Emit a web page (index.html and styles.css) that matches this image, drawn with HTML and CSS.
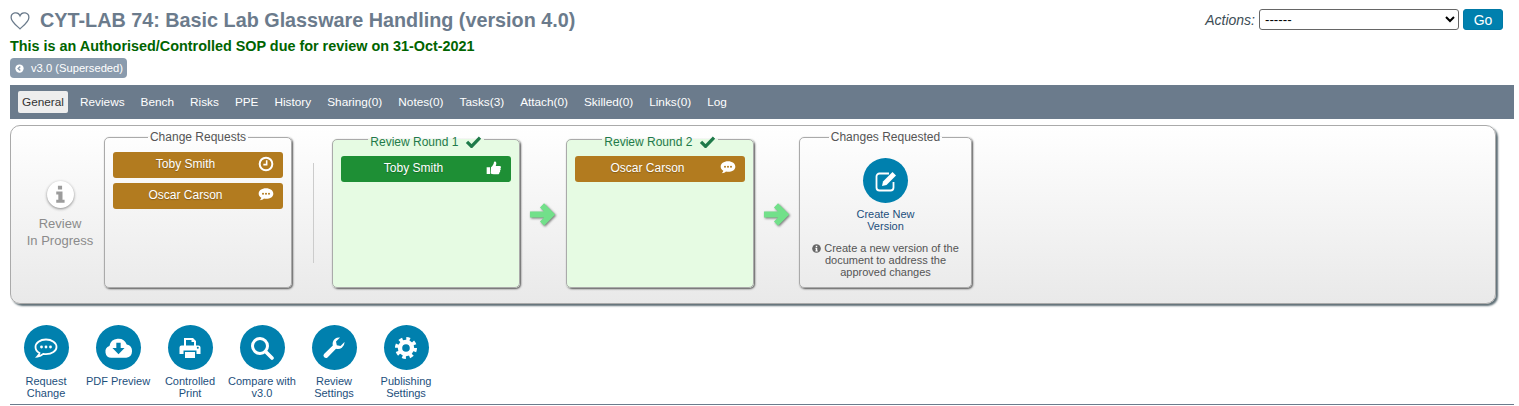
FILE: index.html
```html
<!DOCTYPE html>
<html lang="en">
<head>
	<meta charset="UTF-8">
	<title>CYT-LAB 74</title>
	<link rel="stylesheet" href="styles.css">
</head>
<body>
	<section class="page">
		<header class="head">
			<div class="head_left">
				<h1 class="title">
					<svg class="heart" viewBox="0 0 24 22"><path d="M12 20.5C7 16 1.2 11.8 1.2 7A5.6 5.6 0 0 1 12 4.6 5.6 5.6 0 0 1 22.8 7C22.8 11.8 17 16 12 20.5Z"/></svg>
					CYT-LAB 74: Basic Lab Glassware Handling (version 4.0)
				</h1>
				<p class="status">This is an Authorised/Controlled SOP due for review on 31-Oct-2021</p>
				<a class="badge">
					<svg viewBox="0 0 24 24"><circle cx="12" cy="12" r="11" fill="#fff"/><path d="M14 6.5 8.5 12l5.5 5.5" fill="none" stroke="#8a9bad" stroke-width="4"/></svg>
					v3.0 (Superseded)
				</a>
			</div>
			<form class="actions">
				<label>Actions:</label>
				<select><option>------</option></select>
				<button type="button">Go</button>
			</form>
		</header>

		<nav class="tabs">
			<a class="active">General</a>
			<a>Reviews</a>
			<a>Bench</a>
			<a>Risks</a>
			<a>PPE</a>
			<a>History</a>
			<a>Sharing(0)</a>
			<a>Notes(0)</a>
			<a>Tasks(3)</a>
			<a>Attach(0)</a>
			<a>Skilled(0)</a>
			<a>Links(0)</a>
			<a>Log</a>
		</nav>

		<section class="flow">
			<div class="state">
				<span class="state_icon">
					<svg viewBox="0 0 24 24"><path d="M9.5 2h5v4.500h-5zM7.500 9h7.500v10h2.500v3.500h-10V19H10v-6.500H7.500z" fill="#9c9c9c"/></svg>
				</span>
				<p>Review<br>In Progress</p>
			</div>

			<fieldset class="box">
				<legend>Change Requests</legend>
				<div class="chip amber">Toby Smith
					<svg viewBox="0 0 24 24"><circle cx="12" cy="12" r="9.5" fill="none" stroke="#fff" stroke-width="3"/><path d="M13 6.500V13H8" fill="none" stroke="#fff" stroke-width="2.400"/></svg>
				</div>
				<div class="chip amber">Oscar Carson
					<svg viewBox="0 0 24 22"><path d="M12 1C5.600 1 1 4.600 1 9c0 2.600 1.600 4.800 4 6.200-.3 1.300-1.100 2.600-2.300 3.800 2.500-.3 4.700-1.300 6.300-2.700 1 .2 2 .3 3 .3 6.400 0 11-3.200 11-7.600S18.400 1 12 1Z" fill="#fff"/><circle cx="7.500" cy="9" r="1.500" fill="#b27b1f"/><circle cx="12" cy="9" r="1.500" fill="#b27b1f"/><circle cx="16.500" cy="9" r="1.500" fill="#b27b1f"/></svg>
				</div>
			</fieldset>

			<div class="divider"></div>

			<fieldset class="box round">
				<legend>Review Round 1
					<svg class="tick" viewBox="0 0 24 20"><path d="M2 10.500 9 17.500 22 4" fill="none" stroke="#1f7a4a" stroke-width="5"/></svg>
				</legend>
				<div class="chip green">Toby Smith
					<svg viewBox="0 0 24 24"><path d="M1 11h5v10H1zM7.500 11c2.500-2 4-4.500 4.500-8 0-1 3.500-1.500 3.500 2 0 1.500-.5 3-1 4h6c2.500 0 2.500 3 1 3.500 1 1 .8 2.800-.5 3.300.6 1.200.2 2.600-1 3 .3 1.500-.5 2.700-2.500 2.700h-6c-2 0-3.500-.5-4.500-1.200z" fill="#fff"/></svg>
				</div>
			</fieldset>

			<div class="arrow">
				<svg viewBox="0 0 28 28"><path d="M1 14H23M13.500 4.500 23 14l-9.500 9.500" fill="none" stroke="#72e08a" stroke-width="6"/></svg>
			</div>

			<fieldset class="box round">
				<legend>Review Round 2
					<svg class="tick" viewBox="0 0 24 20"><path d="M2 10.500 9 17.500 22 4" fill="none" stroke="#1f7a4a" stroke-width="5"/></svg>
				</legend>
				<div class="chip amber">Oscar Carson
					<svg viewBox="0 0 24 22"><path d="M12 1C5.600 1 1 4.600 1 9c0 2.600 1.600 4.800 4 6.200-.3 1.300-1.100 2.600-2.300 3.800 2.500-.3 4.700-1.300 6.300-2.700 1 .2 2 .3 3 .3 6.400 0 11-3.200 11-7.600S18.400 1 12 1Z" fill="#fff"/><circle cx="7.500" cy="9" r="1.500" fill="#b27b1f"/><circle cx="12" cy="9" r="1.500" fill="#b27b1f"/><circle cx="16.500" cy="9" r="1.500" fill="#b27b1f"/></svg>
				</div>
			</fieldset>

			<div class="arrow">
				<svg viewBox="0 0 28 28"><path d="M1 14H23M13.500 4.500 23 14l-9.500 9.500" fill="none" stroke="#72e08a" stroke-width="6"/></svg>
			</div>

			<fieldset class="box next">
				<legend>Changes Requested</legend>
				<a class="tool">
					<span class="disc">
						<svg viewBox="0 0 24 24"><path d="M15 4.500H5.500a3 3 0 0 0-3 3v11a3 3 0 0 0 3 3h11a3 3 0 0 0 3-3V13" fill="none" stroke="#fff" stroke-width="1.800"/><path d="M9 12.500 18.500 3l3.500 3.500-9.500 9.500-4.500 1z" fill="#fff"/></svg>
					</span>
					Create New<br>Version
				</a>
				<p class="hint">
					<svg viewBox="0 0 24 24"><circle cx="12" cy="12" r="11.500" fill="#666"/><path d="M10 4.500h4v3.500h-4zM9 10h5v7.500h1.500V20h-6.500v-2.500H10V12.500H9z" fill="#fff"/></svg>
					Create a new version of the document to address the approved changes
				</p>
			</fieldset>
		</section>

		<section class="tools">
			<a class="tool">
				<span class="disc"><svg viewBox="0 0 24 24"><path d="M12 3.500C6 3.500 1.500 6.800 1.500 11c0 2.500 1.600 4.700 4 6-.3 1.300-1 2.500-2 3.500 2.300-.3 4.300-1.300 5.800-2.600.9.100 1.800.2 2.700.2 6 0 10.500-3 10.500-7.100S18 3.500 12 3.500Z" fill="none" stroke="#fff" stroke-width="1.800"/><circle cx="7.500" cy="11" r="1.400" fill="#fff"/><circle cx="12" cy="11" r="1.400" fill="#fff"/><circle cx="16.500" cy="11" r="1.400" fill="#fff"/></svg></span>
				Request<br>Change
			</a>
			<a class="tool">
				<span class="disc"><svg class="wide" viewBox="0 0 24 24"><path d="M6 20.500A5 5 0 0 1 4.500 10.800 7.500 7.500 0 0 1 18.800 9.500 5.600 5.600 0 0 1 18.500 20.500Z" fill="#fff"/><path d="M10.200 8h3.600v4.500H17L12 17.500 7 12.500h3.200z" fill="#0080ae"/></svg></span>
				PDF Preview
			</a>
			<a class="tool">
				<span class="disc"><svg viewBox="0 0 24 24"><path d="M6 10V2h9l3 3v5h-2V6h-2.500V4H8v6z" fill="#fff"/><path d="M1.500 11.500a2 2 0 0 1 2-2h17a2 2 0 0 1 2 2V18h-4v-3.500h-13V18h-4z" fill="#fff"/><path d="M7 16h10v6H7z" fill="#fff"/><circle cx="19.800" cy="11.800" r="1" fill="#0080ae"/></svg></span>
				Controlled<br>Print
			</a>
			<a class="tool">
				<span class="disc"><svg viewBox="0 0 24 24"><circle cx="10" cy="10" r="7.500" fill="none" stroke="#fff" stroke-width="3"/><path d="m15.500 15.500 6.500 6.500" fill="none" stroke="#fff" stroke-width="3.600" stroke-linecap="round"/></svg></span>
				Compare with<br>v3.0
			</a>
			<a class="tool">
				<span class="disc"><svg viewBox="0 0 24 24"><path d="M22.500 6.500a6.500 6.500 0 0 1-8.500 6.200L5.500 21.500a2.500 2.500 0 0 1-3.500-3.500l8.800-8.500A6.500 6.500 0 0 1 18 1.500l-4 4 .8 3.700 3.700.8 4-4z" fill="#fff"/></svg></span>
				Review<br>Settings
			</a>
			<a class="tool">
				<span class="disc"><svg viewBox="0 0 24 24"><circle cx="12" cy="12" r="9" fill="none" stroke="#fff" stroke-width="4" stroke-dasharray="3.530 3.540"/><circle cx="12" cy="12" r="6" fill="none" stroke="#fff" stroke-width="4.400"/></svg></span>
				Publishing<br>Settings
			</a>
		</section>
	</section>
</body>
</html>
```

FILE: styles.css
```css
*{margin:0;padding:0;box-sizing:border-box}
body{
	font-family:"Liberation Sans",Arial,sans-serif;
	font-size:12px;
	color:#333;
	background:#fff;
}
a{display:block}
.page{
	width:1514px;
	height:406px;
	padding-left:10px;
	overflow:hidden;
}
/* 顶部 */
.head{
	display:flex;
	justify-content:space-between;
	height:85px;
}
.title{
	display:flex;
	align-items:center;
	gap:10px;
	height:21px;
	margin-top:10px;
	font-size:19.8px;
	font-weight:bold;
	color:#6b7b8c;
}
.heart{
	width:20px;
	height:18px;
	fill:none;
	stroke:#6b7b8c;
	stroke-width:1.6;
}
.status{
	margin-top:7px;
	font-size:14.4px;
	line-height:16px;
	font-weight:bold;
	color:#006400;
}
.badge{
	display:flex;
	align-items:center;
	gap:7px;
	width:117px;
	height:20px;
	margin-top:4px;
	padding-left:5px;
	border-radius:4px;
	background:#8a9bad;
	color:#fff;
	font-size:11.2px;
	white-space:nowrap;
}
.badge svg{width:9px;height:9px}
.actions{
	display:flex;
	align-items:center;
	height:21px;
	margin-top:9px;
	margin-right:11px;
	font-size:14px;
}
.actions label{
	font-style:italic;
	color:#3d4d55;
	margin-right:4px;
}
.actions select{
	width:200px;
	height:21px;
	padding-left:1px;
	border:1px solid #666;
	border-radius:3px;
	background:#fff;
	color:#000;
	font:13.3px "Liberation Sans",Arial,sans-serif;
}
.actions button{
	width:40px;
	height:21px;
	margin-left:4px;
	border:1px solid #0079a6;
	border-radius:3px;
	background:#0080ae;
	color:#fff;
	font:14px "Liberation Sans",Arial,sans-serif;
}
/* 标签栏 */
.tabs{
	display:flex;
	align-items:center;
	gap:8px;
	height:34px;
	padding-left:8px;
	background:#6b7b8c;
	color:#fff;
	font-size:11.8px;
}
.tabs a{
	padding:4px;
	line-height:14px;
	white-space:nowrap;
}
.tabs .active{
	border-radius:2px;
	background:#eee;
	color:#333;
}
/* 流程面板 */
.flow{
	display:flex;
	align-items:flex-end;
	width:1486px;
	height:179px;
	margin-top:6px;
	padding:0 0 15px 5px;
	border:1px solid #aaa;
	border-radius:10px;
	background:linear-gradient(#fff,#e9e9e9);
	box-shadow:2px 2px 2px #5f6f76;
}
.state{
	align-self:center;
	width:88px;
	margin-top:15px;
	text-align:center;
	font-size:13px;
	line-height:17px;
	color:#8b8b8b;
}
.state_icon{
	display:flex;
	justify-content:center;
	align-items:center;
	width:27px;
	height:27px;
	margin:0 auto 7px;
	border-radius:50%;
	background:#fff;
	box-shadow:0 1px 3px #888;
}
.state_icon svg{width:20px;height:20px}
.box{
	width:188px;
	height:158px;
	padding:8px 8px 0;
	border:1px solid #aaa;
	border-radius:5px;
	box-shadow:1px 1px 2px #555;
}
.box legend{
	margin:0 auto;
	padding:0 2px;
	line-height:14px;
	color:#555;
}
.round{
	height:159px;
	padding-top:7px;
	background:#e6fbe3;
}
.round legend{
	padding-top:6px;
	color:#1f7a4a;
}
.tick{
	width:17px;
	height:13px;
	margin-left:3px;
	vertical-align:-2px;
}
.chip{
	display:flex;
	align-items:center;
	justify-content:space-between;
	height:26px;
	margin-bottom:5px;
	padding:0 9px 2px 0;
	border-radius:3px;
	color:#fff;
	text-shadow:0 1px 1px rgba(0,0,0,.25);
}
.chip::before{content:"";width:0}
.chip svg{width:16px;height:16px}
.amber{background:#b27b1f}
.green{background:#1e8f35}
.divider{
	align-self:center;
	width:1px;
	height:100px;
	margin:12px 18px 0 21px;
	background:#ccc;
}
.arrow{
	display:flex;
	justify-content:center;
	align-self:center;
	width:46px;
	margin-top:15px;
	padding-right:2px;
}
.arrow svg{
	width:27px;
	height:27px;
	filter:drop-shadow(1px 1px 1px #777);
}
.next{
	width:173px;
	margin-left:-1px;
	padding:14px 6px 0;
}
.tool{
	width:72px;
	margin:0 auto;
	text-align:center;
	font-size:11px;
	line-height:12px;
	color:#1d4f7c;
}
.next .tool{width:100%}
.disc{
	display:flex;
	justify-content:center;
	align-items:center;
	width:45px;
	height:45px;
	margin:0 auto 5px;
	border-radius:50%;
	background:#0080ae;
}
.disc svg{width:24px;height:24px}
.disc .wide{width:29px;height:29px}
.hint{
	margin-top:10px;
	text-align:center;
	font-size:11px;
	line-height:12px;
	color:#555;
}
.hint svg{width:9px;height:9px;vertical-align:-1px}
/* 底部按钮 */
.tools{
	display:flex;
	height:80px;
	margin-top:21px;
	border-bottom:1px solid #6b7b8c;
}
.tools .tool{margin:0}
```
